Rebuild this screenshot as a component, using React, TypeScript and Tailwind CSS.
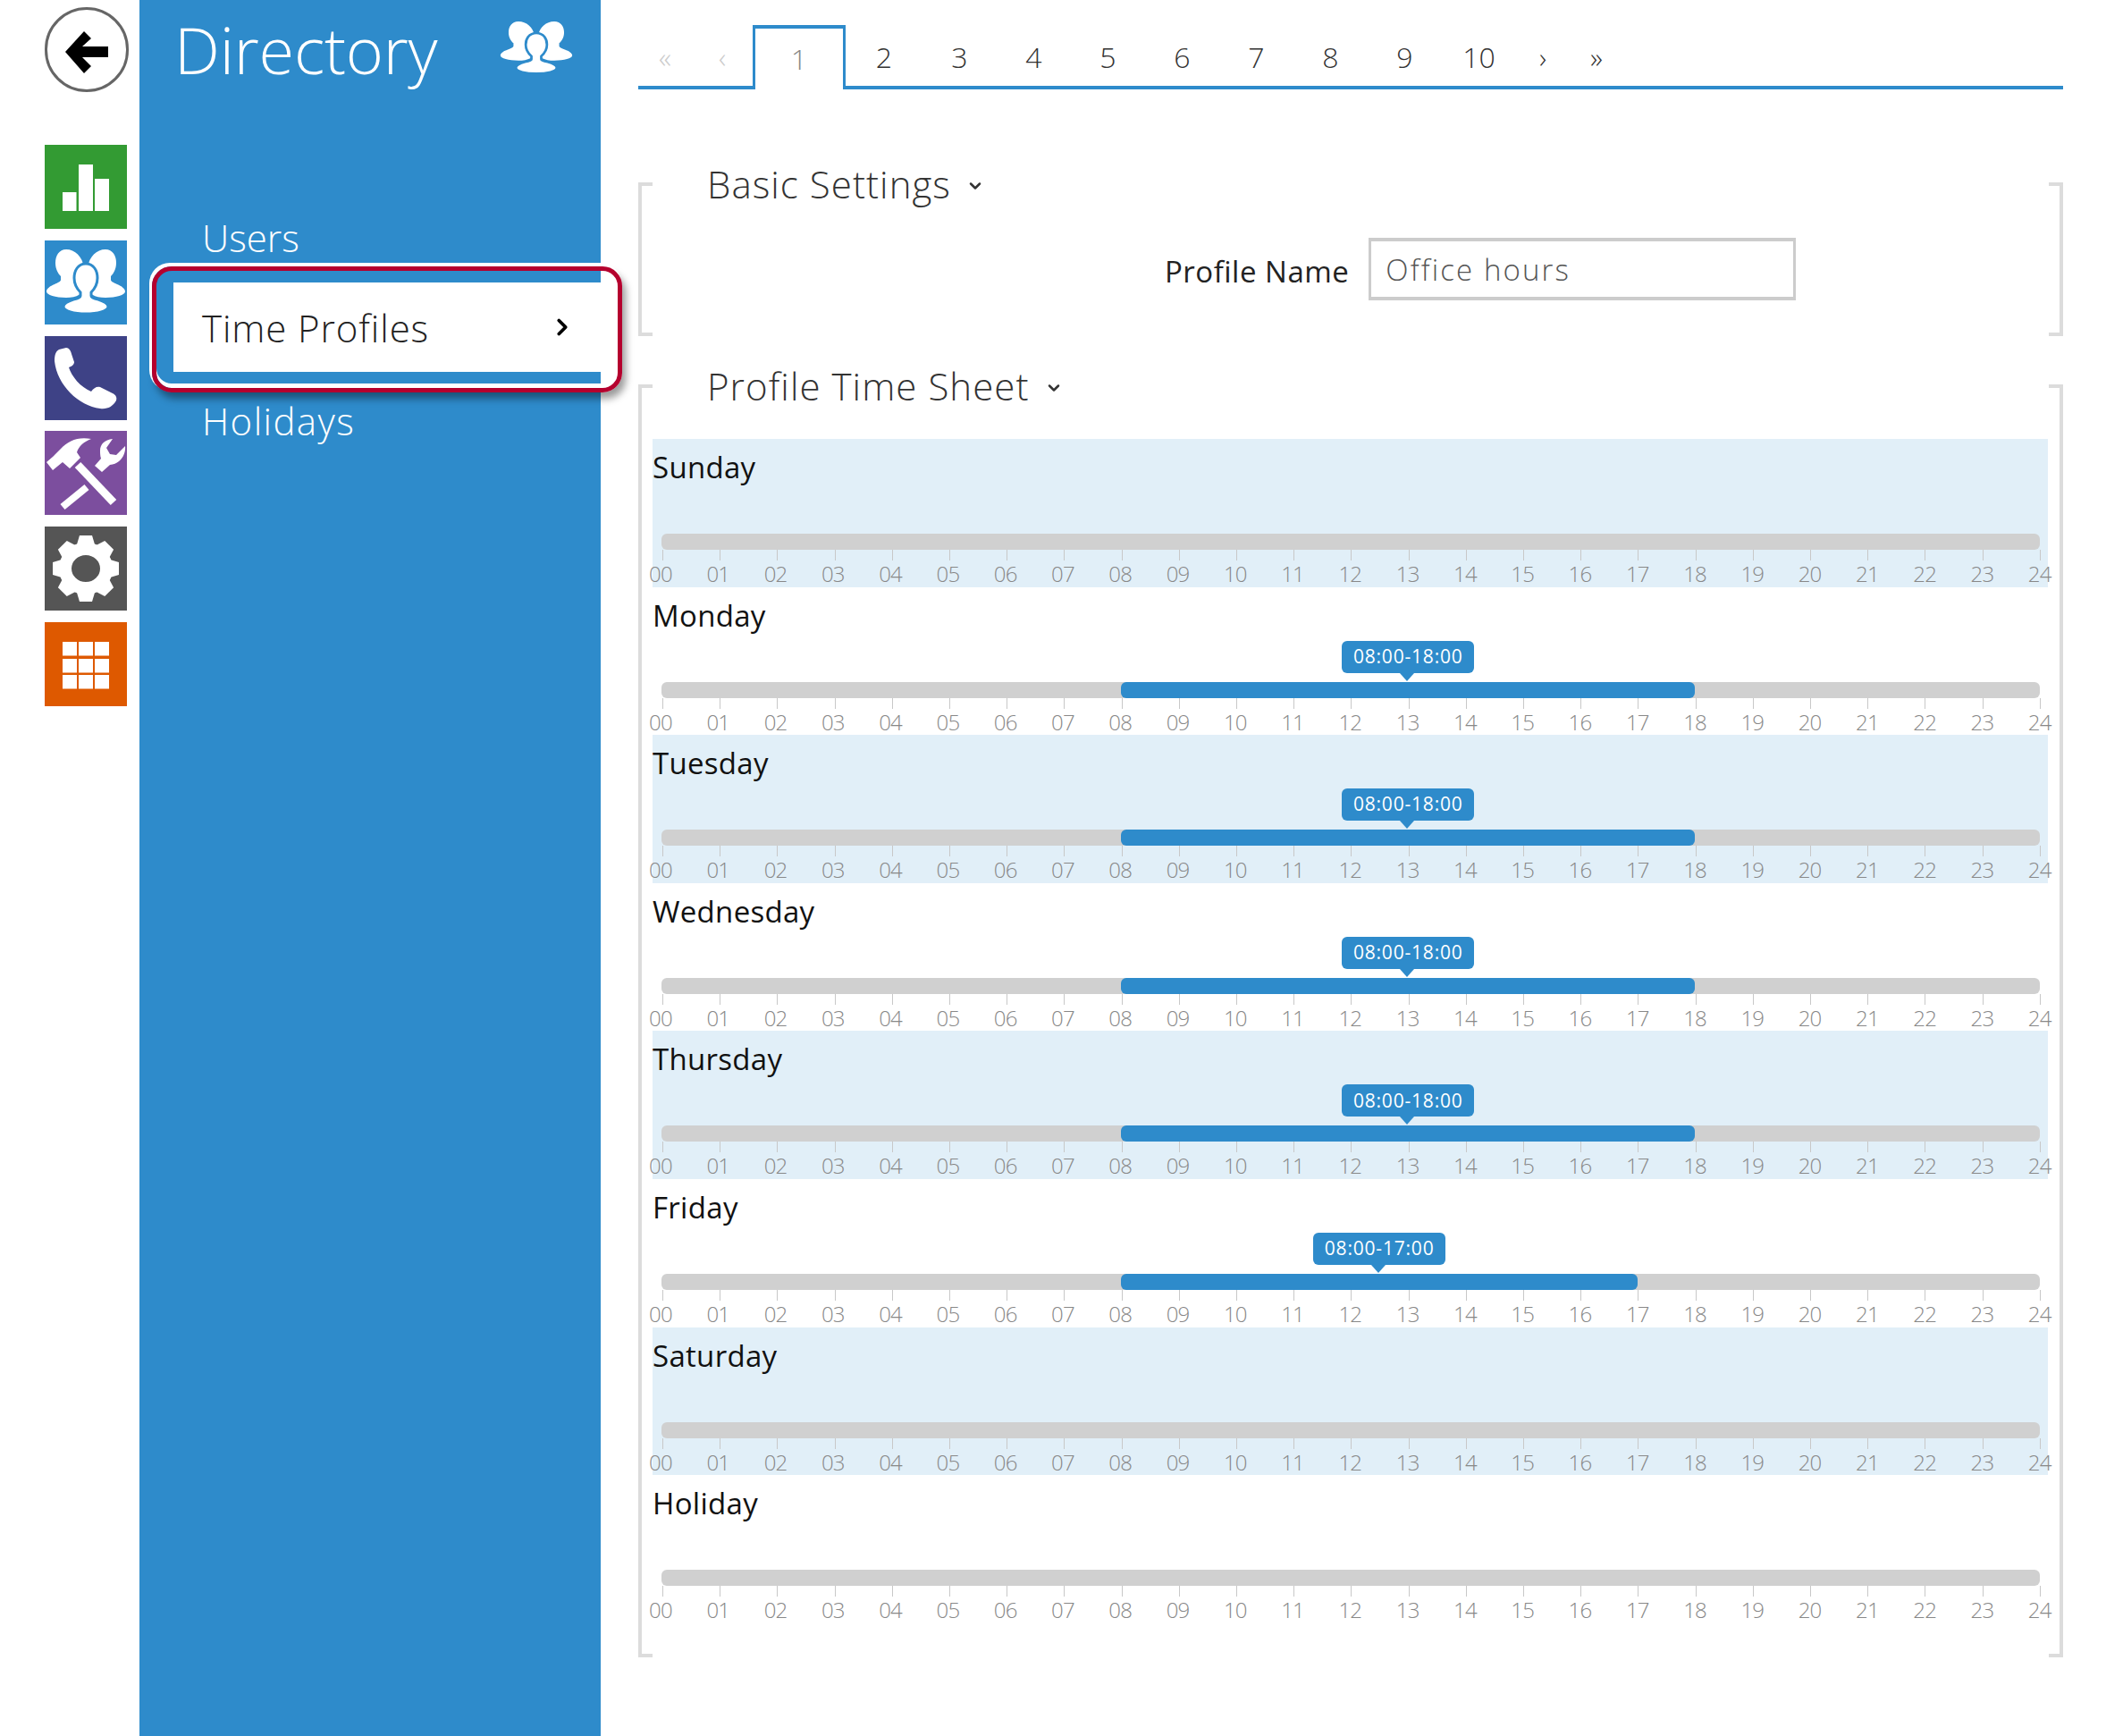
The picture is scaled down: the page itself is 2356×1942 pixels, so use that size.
import * as React from "react";
import { ChevronDown, ChevronRight } from "lucide-react";

const days = [
  { name: "Sunday" },
  { name: "Monday", start: 8, end: 18, label: "08:00-18:00" },
  { name: "Tuesday", start: 8, end: 18, label: "08:00-18:00" },
  { name: "Wednesday", start: 8, end: 18, label: "08:00-18:00" },
  { name: "Thursday", start: 8, end: 18, label: "08:00-18:00" },
  { name: "Friday", start: 8, end: 17, label: "08:00-17:00" },
  { name: "Saturday" },
  { name: "Holiday" },
];

const hours = Array.from({ length: 25 }, (_, i) => String(i).padStart(2, "0"));
const pages = ["2", "3", "4", "5", "6", "7", "8", "9", "10", "›", "»"];

function People({ className }: { className?: string }) {
  return (
    <svg viewBox="0 0 92 94" preserveAspectRatio="none" className={className}>
      <g fill="#fff" stroke="#2e8bcb" strokeWidth="3">
        <path d="M24 10C16 10 12 17 12 25C12 32 15 37 18 40V44C18 46 15 47 11 49C6 51 2 54 2 57C2 61 12 64 24 64C36 64 44 60 44 50V30C42 18 34 10 24 10Z" stroke="none" />
        <path d="M68 10C76 10 80 17 80 25C80 32 77 37 74 40V44C74 46 77 47 81 49C86 51 90 54 90 57C90 61 80 64 68 64C56 64 48 60 48 50V30C50 18 58 10 68 10Z" stroke="none" />
        <path d="M46 26C37 26 33 34 33 42C33 50 37 55 40 58V62C40 64 37 65 32 66C26 68 21 70 21 74C21 79 33 82 46 82C59 82 71 79 71 74C71 70 66 68 60 66C55 65 52 64 52 62V58C55 55 59 50 59 42C59 34 55 26 46 26Z" />
      </g>
    </svg>
  );
}

function Bars() {
  return (
    <svg viewBox="0 0 92 94" className="h-full w-full" fill="#fff">
      <rect x="20" y="53" width="15.5" height="21" />
      <rect x="38" y="22" width="16" height="52" />
      <rect x="56" y="38" width="16" height="36" />
    </svg>
  );
}

function Phone() {
  return (
    <svg viewBox="0 0 92 94" className="h-full w-full" fill="#fff">
      <path d="M16 15L24 13C27 13 29 16 30 20L33 29C33 32 30 34 27 35C30 45 40 57 52 62C55 58 58 56 62 57L76 64C80 66 81 69 80 72C76 79 70 82 62 81C38 78 14 55 11 28C11 22 12 17 16 15Z" />
    </svg>
  );
}

function Tools() {
  return (
    <svg viewBox="0 0 92 94" className="h-full w-full" fill="#fff">
      <path d="M2 35L9 44L20 35L28 42L40 30L36 24C38 17 44 12 52 9C38 6 26 11 18 20L14 24L9 29Z" />
      <path d="M37 38L77 80" stroke="#fff" strokeWidth="9" fill="none" />
      <path d="M20 85L47 63" stroke="#fff" strokeWidth="8" fill="none" />
      <path d="M62 22C62 15 67 10 76 9L69 19L73 26L80 27L90 17C91 26 85 37 73 38L64 46L56 39L63 31C62 28 62 25 62 22Z" />
    </svg>
  );
}

function Gear() {
  return (
    <svg viewBox="0 0 92 94" className="h-full w-full" fill="#fff">
      <ellipse cx="46" cy="47" rx="23" ry="22" fill="none" stroke="#fff" strokeWidth="14" />
      {[0, 45, 90, 135, 180, 225, 270, 315].map((a) => (
        <path key={a} d="M36 20L39 10H53L56 20Z" transform={`rotate(${a} 46 47)`} />
      ))}
    </svg>
  );
}

function Grid() {
  const xs = [20, 38, 56];
  const ys = [22, 41, 59];
  return (
    <svg viewBox="0 0 92 94" className="h-full w-full" fill="#fff">
      {ys.map((y) => xs.map((x) => <rect key={`${x}-${y}`} x={x} y={y} width="16" height="15.5" />))}
    </svg>
  );
}

function Rail() {
  const tiles = [
    { bg: "bg-[#339b33]", icon: <Bars /> },
    { bg: "bg-[#2e8bcb]", icon: <People className="h-full w-full" /> },
    { bg: "bg-[#3e4286]", icon: <Phone /> },
    { bg: "bg-[#7c4e9e]", icon: <Tools /> },
    { bg: "bg-[#555555]", icon: <Gear /> },
    { bg: "bg-[#de5900]", icon: <Grid /> },
  ];
  return (
    <div className="w-[156px] shrink-0 pl-[50px] pt-2">
      <div className="h-[95px] w-[94px] rounded-full border-[3px] border-[#666]">
        <svg viewBox="0 0 88 89" className="h-full w-full">
          <path d="M20 47L41 24L49 32L39 41H68V53H39L49 63L41 71Z" fill="#000" />
        </svg>
      </div>
      <div className="mt-[59px] flex flex-col gap-[12.8px]">
        {tiles.map((t, i) => (
          <div key={i} className={`h-[94px] w-[92px] ${t.bg}`}>
            {t.icon}
          </div>
        ))}
      </div>
    </div>
  );
}

function Sidebar() {
  return (
    <div className="relative z-10 w-[516px] shrink-0 bg-[#2e8bcb] text-white">
      <div className="flex h-[110px] items-start justify-between pl-[39px] pr-[30px]">
        <span className="text-[72px] font-light leading-[110px] tracking-[-0.2px]">Directory</span>
        <People className="mt-[16px] h-[76px] w-[84px]" />
      </div>
      <div className="mt-[106px]">
        <div className="flex h-[100px] items-center pb-[2px] pl-[70px] text-[42px] font-light">Users</div>
        <div className="ml-[38px] flex h-[100px] items-center justify-between bg-white pl-[32px] pr-[28px] text-[42px] font-light tracking-[0.9px] text-[#222]">
          <span>Time Profiles</span>
          <ChevronRight className="h-[30px] w-[30px] text-black" strokeWidth={3} />
        </div>
        <div className="flex h-[100px] items-center pl-[70px] pt-[8px] text-[42px] font-light tracking-[1.4px]">Holidays</div>
      </div>
      <div className="absolute left-[14px] top-[298px] h-[141px] w-[526px] rounded-[22px] border-[5px] border-[#b5002e] shadow-[-2px_-3px_0_1px_#fff,inset_0_-5px_0_#fff,4px_7px_9px_rgba(0,0,0,0.4)]" />
    </div>
  );
}

function Pager() {
  return (
    <div className="flex h-[100px] items-end border-b-4 border-[#2e8bcb] text-[32px] font-light text-[#333]">
      <div className="flex h-[68px] w-[60px] items-center justify-center pt-[3px] text-[#ccc]">«</div>
      <div className="flex h-[68px] w-[68px] items-center justify-center pt-[3px] text-[#ccc]">‹</div>
      <div className="-mb-1 flex h-[72px] w-[104px] items-center justify-center border-x-[3px] border-t-4 border-[#2e8bcb] bg-white text-[#888]">1</div>
      {pages.map((p, i) => (
        <div
          key={p}
          className={`flex h-[68px] items-center justify-center pt-[3px] ${i === 0 ? "w-[86px]" : i > 8 ? "w-[60px]" : "w-[83px]"}`}
        >
          {p}
        </div>
      ))}
    </div>
  );
}

function Bracket({ className, title, children }: { className: string; title: string; children: React.ReactNode }) {
  const tick = "absolute h-1 w-[16px] bg-[#dcdcdc]";
  return (
    <section className={`relative border-x-4 border-[#dcdcdc] ${className}`}>
      <span className={`${tick} -left-1 top-0`} />
      <span className={`${tick} -right-1 top-0`} />
      <span className={`${tick} -left-1 bottom-0`} />
      <span className={`${tick} -right-1 bottom-0`} />
      <h2 className="absolute -top-[28px] left-[73px] flex items-center gap-[17px] text-[42px] font-light leading-[60px] tracking-[1.05px] text-[#333]">
        {title}
        <ChevronDown className="mt-1 h-[20px] w-[20px] text-[#333]" strokeWidth={3} />
      </h2>
      {children}
    </section>
  );
}

function DayRow({ day, shaded }: { day: (typeof days)[number]; shaded: boolean }) {
  const hasRange = day.start !== undefined && day.end !== undefined;
  const left = hasRange ? (day.start! / 24) * 100 : 0;
  const width = hasRange ? ((day.end! - day.start!) / 24) * 100 : 0;
  return (
    <div className={`h-[165.6px] pl-[10px] pr-[9px] ${shaded ? "bg-[#e1eff8]" : ""}`}>
      <div className="-ml-[10px] h-[106px] pt-[9px] text-[33px] leading-[46px] tracking-[0.3px] text-[#111]">{day.name}</div>
      <div className="relative h-[18px] rounded-[6px] bg-[#d0d0d0]">
        {hasRange && (
          <>
            <div
              className="absolute inset-y-0 rounded-[6px] bg-[#2e8bcb]"
              style={{ left: `${left}%`, width: `${width}%` }}
            />
            <div
              className="absolute bottom-[28px] flex h-[36px] w-[148px] -translate-x-1/2 items-center justify-center rounded-[6px] bg-[#2e8bcb] text-[21px] tracking-[0.8px] text-white"
              style={{ left: `${left + width / 2}%` }}
            >
              {day.label}
              <span className="absolute left-1/2 top-full -ml-[9px] h-0 w-0 border-x-[8px] border-t-[9px] border-x-transparent border-t-[#2e8bcb]" />
            </div>
          </>
        )}
      </div>
      <div className="ml-px -mr-px flex h-[12px] justify-between">
        {hours.map((h) => (
          <span key={h} className="h-full w-px bg-[#c8c8c8]" />
        ))}
      </div>
      <div className="-ml-px flex h-[30px] justify-between">
        {hours.map((h) => (
          <span key={h} className="flex w-0 justify-center text-[24px] font-light leading-[30px] tracking-[-0.8px] text-[#888]">
            {h}
          </span>
        ))}
      </div>
    </div>
  );
}

export default function App() {
  return (
    <div className="flex min-h-[1942px] w-[2356px] bg-white font-['Open_Sans',sans-serif]">
      <Rail />
      <Sidebar />
      <main className="w-[1684px] pl-[42px] pr-[48px]">
        <Pager />
        <Bracket className="mt-[104px] h-[172px]" title="Basic Settings">
          <div className="flex items-center pl-[585px] pt-[62px]">
            <label className="pt-[5px] text-[33px] font-normal tracking-[0.5px] text-[#222]">Profile Name</label>
            <div className="ml-[22px] flex h-[70px] w-[478px] items-center border-x-[3px] border-y-4 border-[#cccccc] pl-[16px] pt-[2px] text-[33px] font-light tracking-[2.1px] text-[#555]">
              Office hours
            </div>
          </div>
        </Bracket>
        <Bracket className="mt-[54px] h-[1424px] pl-[12px] pr-[13px] pt-[61px]" title="Profile Time Sheet">
          {days.map((d, i) => (
            <DayRow key={d.name} day={d} shaded={i % 2 === 0 && i < 7} />
          ))}
        </Bracket>
      </main>
    </div>
  );
}
